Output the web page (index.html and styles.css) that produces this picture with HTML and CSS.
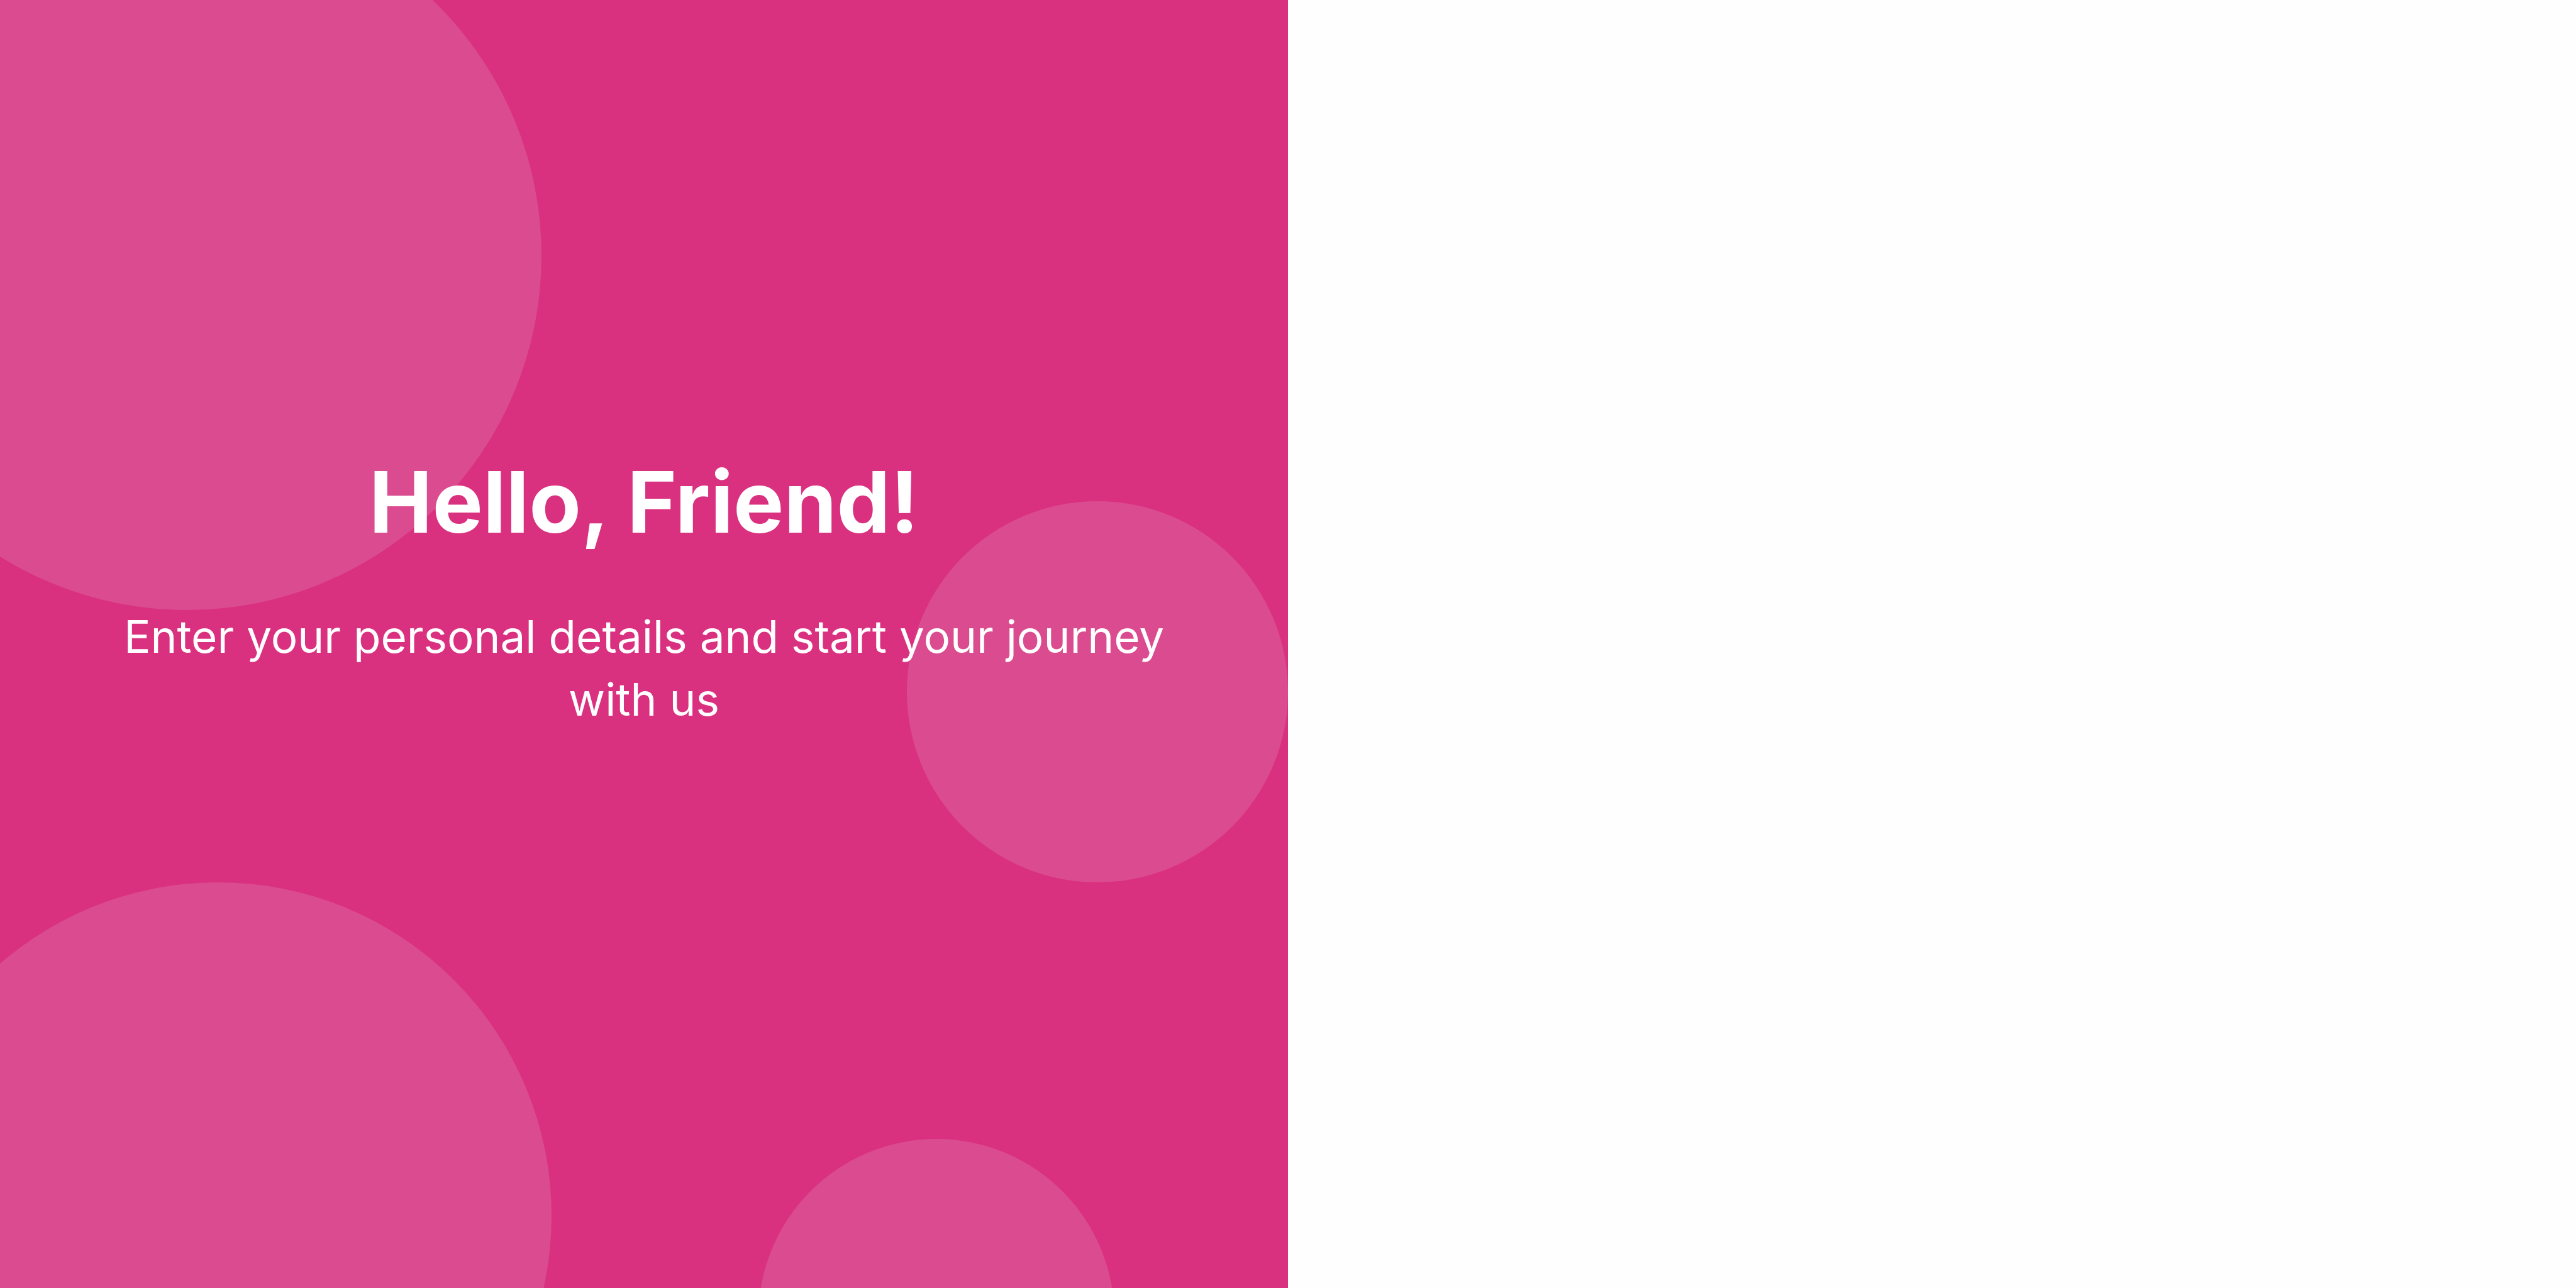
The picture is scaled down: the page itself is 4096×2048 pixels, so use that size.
FILE: index.html
```html
<!DOCTYPE html>
<html lang="en">
<head>
  <meta charset="utf-8">
  <meta name="viewport" content="width=device-width, initial-scale=1">
  <title>Hello, Friend!</title>
  <link rel="stylesheet" href="styles.css">
</head>
<body>
  <main class="page">
    <section class="welcome">
      <span class="bubble bubble-top" aria-hidden="true"></span>
      <span class="bubble bubble-side" aria-hidden="true"></span>
      <span class="bubble bubble-corner" aria-hidden="true"></span>
      <span class="bubble bubble-bottom" aria-hidden="true"></span>
      <div class="welcome-text">
        <h1 class="title">Hello, Friend!</h1>
        <p class="lead">Enter your personal details and start your journey with us</p>
      </div>
    </section>
  </main>
</body>
</html>
```
FILE: styles.css
```css
body {
  margin: 0;
  background: #fefefe;
  font-family: "Inter", "Liberation Sans", sans-serif;
}

.page {
  display: grid;
  grid-template-columns: 1fr 1fr;
  min-height: 100vh;
}

.welcome {
  position: relative;
  display: flex;
  flex-direction: column;
  justify-content: center;
  overflow: hidden;
  padding: 0 160px 184px;
  background: #da3080;
  color: #fff;
  text-align: center;
}

/* Translucent circles behind the greeting */
.bubble {
  position: absolute;
  aspect-ratio: 1;
  border-radius: 50%;
  background: #da4c8f;
}

.bubble-top {
  top: -157px;
  left: -266px;
  width: 1127px;
}

.bubble-side {
  top: 797px;
  right: 0;
  width: 606px;
}

.bubble-corner {
  top: 1403px;
  left: -183px;
  width: 1060px;
}

.bubble-bottom {
  top: 1811px;
  left: 1206px;
  width: 566px;
}

.welcome-text {
  position: relative;
  display: flex;
  flex-direction: column;
  gap: 68px;
}

.title {
  margin: 0;
  font-size: 135px;
  line-height: 192px;
  font-weight: 700;
}

.lead {
  margin: 0;
  font-size: 71px;
  line-height: 100px;
  font-weight: 400;
}
```
